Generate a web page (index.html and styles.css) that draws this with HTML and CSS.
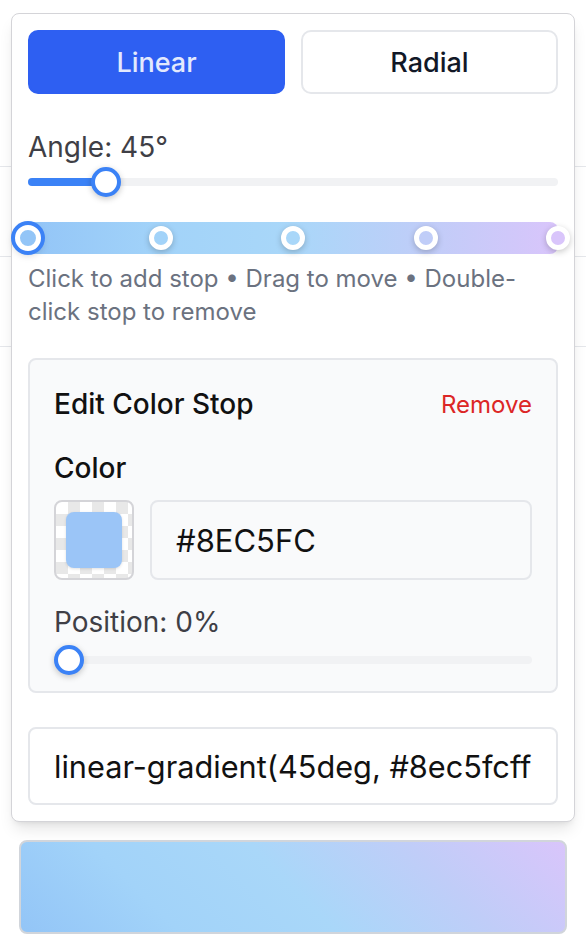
FILE: index.html
```html
<!DOCTYPE html>
<html lang="en">
<head>
<meta charset="utf-8">
<title>Gradient Editor</title>
<link rel="stylesheet" href="styles.css">
</head>
<body>
<div class="backdrop">
  <div class="bg-row row-a"></div>
  <div class="bg-row row-b"></div>
  <div class="bg-row row-b"></div>
</div>

<div class="popover">
  <div class="tabs">
    <button class="tab active">Linear</button>
    <button class="tab">Radial</button>
  </div>

  <div class="label angle-label">Angle: 45°</div>
  <div class="slider">
    <div class="track"><div class="fill" style="width:77.5px"></div></div>
    <div class="thumb" style="left:62.5px"></div>
  </div>

  <div class="gradbar">
    <span class="stop selected" style="left:0%;background:#93c5f7"></span>
    <span class="stop" style="left:25%;background:#a2d3f9"></span>
    <span class="stop" style="left:50%;background:#a9d7f9"></span>
    <span class="stop" style="left:75%;background:#c0cdf8"></span>
    <span class="stop" style="left:100%;background:#d9c5fb"></span>
  </div>
  <p class="hint">Click to add stop • Drag to move • Double-click stop to remove</p>

  <div class="panel">
    <div class="panel-head">
      <span class="panel-title">Edit Color Stop</span>
      <button class="remove">Remove</button>
    </div>
    <div class="field-label">Color</div>
    <div class="color-row">
      <div class="swatch"><div class="swatch-color"></div></div>
      <input class="hex" type="text" value="#8EC5FC" readonly>
    </div>
    <div class="label pos-label">Position: 0%</div>
    <div class="slider small">
      <div class="track"></div>
      <div class="thumb" style="left:0px"></div>
    </div>
  </div>

  <input class="css-output" type="text" value="linear-gradient(45deg, #8ec5fcff 0%, #a2d3f9ff 25%, #a9d7f9ff 50%, #c0cdf8ff 75%, #e0c3fcff 100%)" readonly>
</div>

<div class="preview"></div>
</body>
</html>
```

FILE: styles.css
```css
* { box-sizing: border-box; }

html, body {
  margin: 0;
  padding: 0;
  background: #ffffff;
}

body {
  position: relative;
  font-family: "Inter", "Noto Sans", sans-serif;
  color: #111111;
}

.backdrop {
  position: absolute;
  top: 0;
  left: 0;
  right: 0;
  z-index: 0;
}

.bg-row {
  border-bottom: 1px solid #e5e7eb;
}
.row-a { height: 167px; }
.row-b { height: 90px; }

.popover {
  position: relative;
  z-index: 1;
  margin: 13px 11px 0;
  background: #ffffff;
  border: 1px solid #d4d4d8;
  border-radius: 8px;
  padding: 16px;
  box-shadow: 0 10px 15px -3px rgba(0,0,0,0.10), 0 4px 6px -4px rgba(0,0,0,0.10);
}

.tabs {
  display: grid;
  grid-template-columns: 1fr 1fr;
  gap: 16px;
}

.tab {
  height: 64px;
  border-radius: 10px;
  border: 2px solid #e5e7eb;
  background: #ffffff;
  font-family: inherit;
  font-size: 27px;
  font-weight: 500;
  color: #111827;
  padding: 0;
}

.tab.active {
  background: #2e5ff2;
  border-color: #2e5ff2;
  color: #e3e9fd;
}

.label {
  font-size: 28px;
  line-height: 36px;
  color: #3f3f46;
}

.angle-label { margin-top: 35px; }

.slider {
  position: relative;
  height: 12px;
  margin-top: 11px;
  display: flex;
  align-items: center;
}

.track {
  position: relative;
  width: 100%;
  height: 8px;
  border-radius: 4px;
  background: #f1f2f4;
}

.fill {
  height: 100%;
  border-radius: 4px;
  background: #3b82f6;
}

.thumb {
  position: absolute;
  top: -9px;
  width: 30px;
  height: 30px;
  border-radius: 50%;
  background: #ffffff;
  border: 4px solid #3b82f6;
  box-shadow: 0 2px 6px rgba(0,0,0,0.22);
}

.gradbar {
  position: relative;
  height: 32px;
  margin-top: 34px;
  border-radius: 8px;
  background: linear-gradient(90deg, #93c5f7 0%, #a2d3f9 25%, #a9d7f9 50%, #c0cdf8 75%, #d9c5fb 100%);
}

.stop {
  position: absolute;
  top: 50%;
  width: 24px;
  height: 24px;
  border-radius: 50%;
  border: 5px solid #ffffff;
  transform: translate(-50%, -50%);
  box-shadow: 0 2px 6px rgba(0,0,0,0.22);
}

.stop.selected {
  width: 26px;
  height: 26px;
  box-shadow: 0 0 0 4px #3b82f6, 0 3px 8px rgba(0,0,0,0.25);
}

.hint {
  margin: 8px 0 0;
  font-size: 24px;
  line-height: 33px;
  color: #6b7280;
}

.panel {
  margin-top: 30px;
  background: #f9fafb;
  border: 2px solid #e5e7eb;
  border-radius: 8px;
  padding: 24px 24px 25px;
}

.panel-head {
  display: flex;
  justify-content: space-between;
  align-items: center;
  height: 40px;
}

.panel-title {
  font-size: 28px;
  font-weight: 500;
  color: #111111;
}

.remove {
  border: none;
  background: none;
  padding: 0;
  font-family: inherit;
  font-size: 24px;
  color: #dc2626;
}

.field-label {
  margin-top: 26px;
  font-size: 28px;
  line-height: 36px;
  font-weight: 500;
  color: #111111;
}

.color-row {
  display: flex;
  gap: 16px;
  margin-top: 14px;
}

.swatch {
  width: 80px;
  height: 80px;
  flex: none;
  border: 2px solid #d4d4d8;
  border-radius: 8px;
  padding: 10px;
  background-color: #ffffff;
  background-image:
    linear-gradient(45deg, #e8e8e8 25%, transparent 25%, transparent 75%, #e8e8e8 75%),
    linear-gradient(45deg, #e8e8e8 25%, transparent 25%, transparent 75%, #e8e8e8 75%);
  background-size: 24px 24px;
  background-position: 0 0, 12px 12px;
}

.swatch-color {
  width: 100%;
  height: 100%;
  border-radius: 8px;
  background: #9bc5f7;
  box-shadow: 0 1px 3px rgba(0,0,0,0.12);
}

.hex {
  flex: 1;
  min-width: 0;
  height: 80px;
  border: 2px solid #e5e7eb;
  border-radius: 8px;
  background: #f9fafb;
  padding: 0 24px;
  font-family: inherit;
  font-size: 31px;
  color: #111111;
}

.pos-label { margin-top: 24px; }

.slider.small { margin-top: 14px; }

.css-output {
  display: block;
  width: 100%;
  height: 78px;
  margin-top: 34px;
  border: 2px solid #e5e7eb;
  border-radius: 8px;
  background: #ffffff;
  padding: 0 24px;
  font-family: inherit;
  font-size: 30.7px;
  color: #111111;
}

.preview {
  position: relative;
  z-index: 1;
  height: 94px;
  margin: 18px 19px 0;
  border: 2px solid #d1d5db;
  border-radius: 8px;
  background: linear-gradient(45deg, #93c5f7 0%, #a2d3f9 25%, #a9d7f9 50%, #c0cdf8 75%, #d9c5fb 100%);
}
```
